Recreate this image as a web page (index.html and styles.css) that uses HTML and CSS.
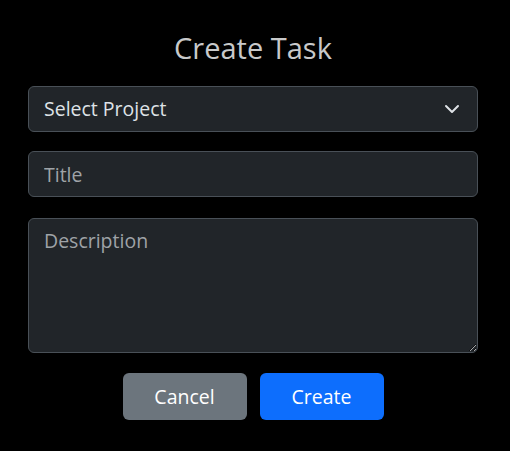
FILE: index.html
```html
<!DOCTYPE html>
<html lang="en">
<head>
<meta charset="utf-8">
<title>Create Task</title>
<link rel="stylesheet" href="styles.css">
</head>
<body>
<form class="task-form">
  <h1 class="form-title">Create Task</h1>
  <div class="select-wrap">
    <select class="field select-field">
      <option>Select Project</option>
    </select>
    <svg class="chevron" width="16" height="16" viewBox="0 0 16 16" aria-hidden="true">
      <path d="M2 5l6 6 6-6" fill="none" stroke="#dee2e6" stroke-width="2" stroke-linecap="round" stroke-linejoin="round"/>
    </svg>
  </div>
  <input class="field title-field" type="text" placeholder="Title">
  <textarea class="field area-field" placeholder="Description"></textarea>
  <div class="actions">
    <button type="button" class="btn btn-cancel">Cancel</button>
    <button type="button" class="btn btn-create">Create</button>
  </div>
</form>
</body>
</html>
```
FILE: styles.css
```css
html, body {
  margin: 0;
  background: #000;
}
body {
  font-family: "Open Sans", "Lato", sans-serif;
  padding: 30px 32px 0 28px;
}
.task-form {
  display: flex;
  flex-direction: column;
  gap: 20px;
}
.form-title {
  margin: 0 0 1px;
  text-align: center;
  font-weight: 400;
  font-size: 29px;
  line-height: 35px;
  color: #c8c9ca;
}
.select-wrap {
  position: relative;
  margin-bottom: -1px;
}
.field {
  display: block;
  box-sizing: border-box;
  width: 100%;
  height: 46px;
  margin: 0;
  padding: 7px 15px;
  font-family: inherit;
  font-size: 19.5px;
  line-height: 30px;
  color: #dee2e6;
  background: #212529;
  border: 1px solid #495057;
  border-radius: 6px;
  outline: none;
}
.field::placeholder {
  color: #9fa3a7;
  opacity: 1;
}
.select-field {
  appearance: none;
  -webkit-appearance: none;
}
.chevron {
  position: absolute;
  right: 18px;
  top: 15px;
  pointer-events: none;
}
.title-field {
  margin-bottom: 1px;
}
.area-field {
  height: 135px;
  resize: vertical;
}
.actions {
  display: flex;
  justify-content: center;
  gap: 13px;
}
.btn {
  width: 124px;
  height: 47px;
  padding: 0;
  border: none;
  border-radius: 6px;
  font-family: inherit;
  font-size: 19.5px;
  color: #fff;
}
.btn-cancel {
  background: #6c757d;
}
.btn-create {
  background: #0d6efd;
}
```
